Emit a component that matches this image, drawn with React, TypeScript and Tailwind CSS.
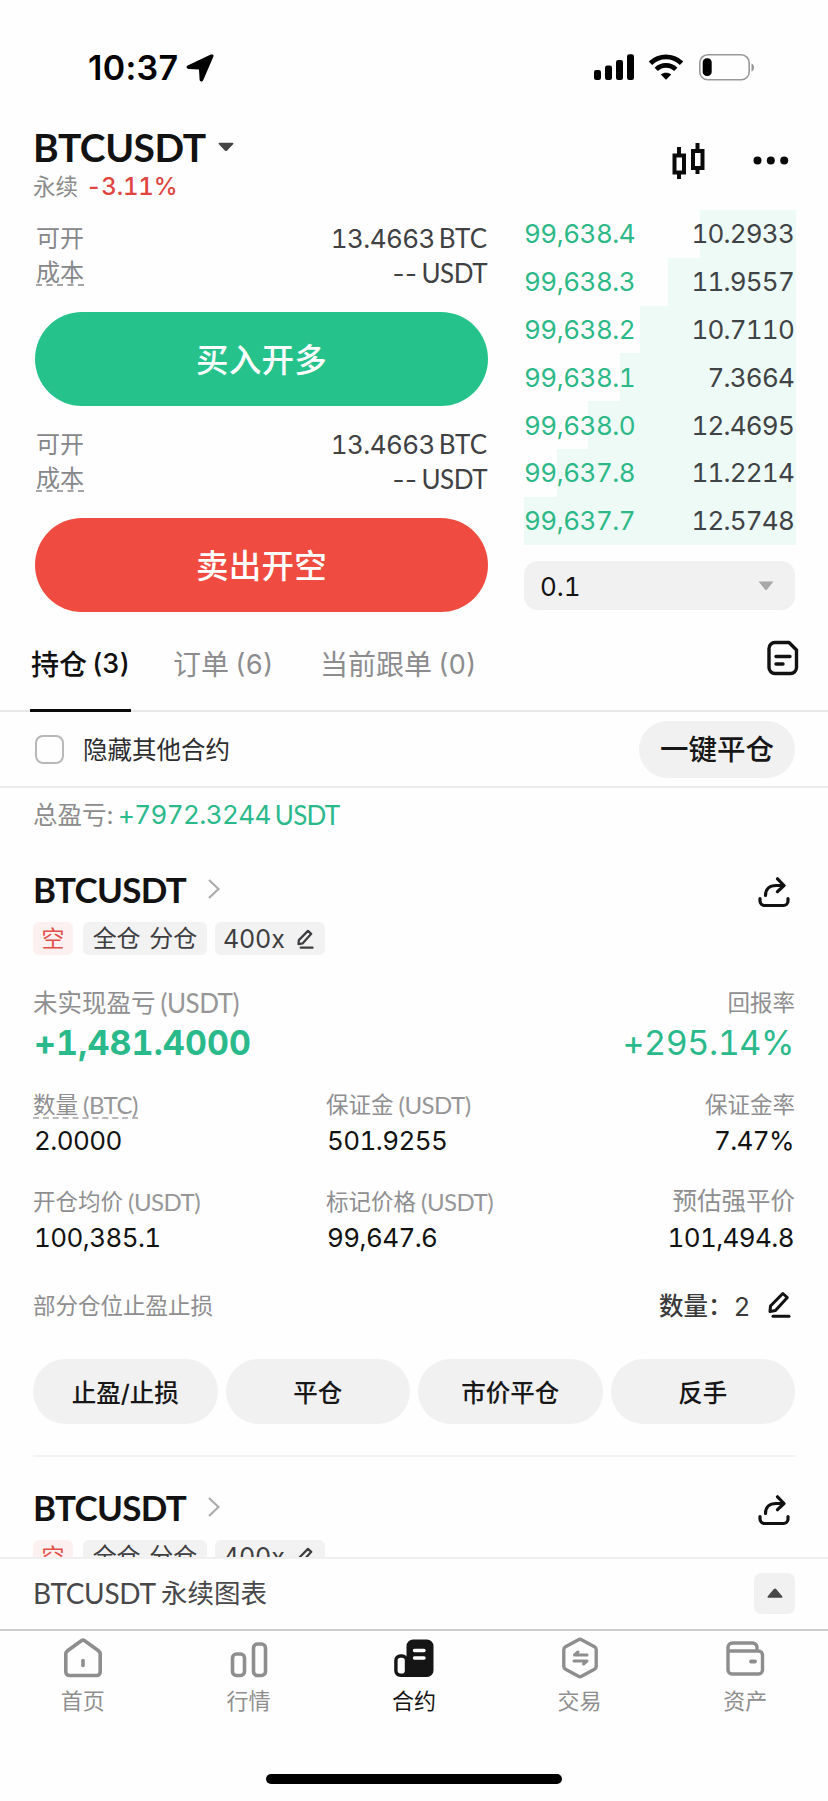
import type { ReactNode } from "react";

const Num = ({ children, className = "" }: { children: ReactNode; className?: string }) => (
  <span className={`tabular-nums ${className}`}>{children}</span>
);

const Lat = ({ children, className = "" }: { children: ReactNode; className?: string }) => (
  <span className={`font-[Lato,'Noto_Sans_CJK_SC',sans-serif] ${className}`}>{children}</span>
);

function StatusBar() {
  return (
    <div className="flex h-[122px] shrink-0 items-start pt-[54px] pl-[88px] text-black">
      <span className="mt-[-2px] w-[98px] text-[34px] leading-8 font-semibold tracking-[0.300px]">10:37</span>
      <svg width="28" height="28" viewBox="0 0 28 28" fill="currentColor">
        <path d="M26.600.6c.9.400 1.200 1.200.8 2L17.200 26.200c-.8 1.800-3.400 1.500-3.600-.4l-.6-10.400-10.600-.5c-2-.1-2.500-2.600-.7-3.500L24.800.6c.7-.300 1.300-.300 1.800 0z" />
      </svg>
      <div className="ml-[380px] flex items-start">
        <svg width="40" height="27" viewBox="0 0 40 27" fill="currentColor">
          <rect x="0" y="16" width="7" height="10" rx="2.200" />
          <rect x="11" y="11.500" width="7" height="14.500" rx="2.200" />
          <rect x="22" y="6" width="7" height="20" rx="2.200" />
          <rect x="33" y="0.300" width="7" height="25.700" rx="2.200" />
        </svg>
        <svg className="ml-[15px]" width="34" height="27" viewBox="0 0 34 27" fill="none" stroke="currentColor">
          <path d="M1.500 9.200a22.300 22.300 0 0 1 31 0" strokeWidth="4.800" />
          <path d="M7.200 15.400a14 14 0 0 1 19.600 0" strokeWidth="4.600" />
          <path d="M17 25.800l-5.200-5.200c2.800-2.600 7.600-2.600 10.400 0z" fill="currentColor" stroke="none" />
        </svg>
        <svg className="ml-[16px]" width="57" height="27" viewBox="0 0 57 27">
          <rect x="0.800" y="0.800" width="49.400" height="25" rx="8" fill="none" stroke="#989898" strokeWidth="1.600" />
          <rect x="3.700" y="4.300" width="9" height="17.800" rx="4.200" fill="#000" />
          <path d="M52.500 9.500c3.400 1 3.400 7 0 8z" fill="#989898" />
        </svg>
      </div>
    </div>
  );
}

function Header() {
  return (
    <div className="flex h-[88px] shrink-0 pl-[33px]">
      <div className="flex w-[639px] flex-col">
        <div className="mt-[5px] flex h-[40px] items-center">
          <Lat className="w-[185px] text-[39px] leading-[40px] font-bold tracking-[-0.500px] text-[#121212]">BTCUSDT</Lat>
          <svg width="16" height="10" viewBox="0 0 16 10" fill="#454545">
            <path d="M1.500.8h13c.9 0 1.200.9.600 1.500L9.200 8.500c-.7.700-1.700.700-2.400 0L.9 2.300C.3 1.700.6.8 1.500.8z" />
          </svg>
        </div>
        <div className="mt-[6px] flex h-[28px] items-center leading-7">
          <span className="w-[53px] text-[22.500px] text-[#8b8b8b]">永续</span>
          <Num className="text-[24px] font-medium tracking-[-0.200px] text-[#e0453f]">-3.11%</Num>
        </div>
      </div>
      <svg className="mt-[21px] shrink-0" width="33" height="36" viewBox="0 0 33 36" fill="none" stroke="#0a0a0a" strokeWidth="4">
        <path d="M2.500 12.500h9.500v17H2.500z M21 8h9.500v17H21z" />
        <path d="M7 4v7M7 31v5M25.500 0v7M25.500 26v5" />
      </svg>
      <svg className="mt-[34px] ml-[48px] shrink-0" width="36" height="9" viewBox="0 0 36 9" fill="#0a0a0a">
        <circle cx="4.500" cy="4.500" r="4" />
        <circle cx="17.800" cy="4.500" r="4" />
        <circle cx="31.200" cy="4.500" r="4" />
      </svg>
    </div>
  );
}

function OrderSide({ label, color }: { label: string; color: string }) {
  return (
    <div className="h-[206px]">
      <div className="flex h-[35px] items-center justify-between pr-px text-[26px] text-[#3f4143]">
        <span className="text-[24px] text-[#86878a]">可开</span>
        <span className="flex items-center gap-[4px]">
          <Num className="tracking-[-0.600px]">13.4663</Num>
          <Lat className="text-[26px]">BTC</Lat>
        </span>
      </div>
      <div className="flex h-[35px] items-center justify-between pr-px text-[26px] text-[#3f4143]">
        <span className="border-b-2 border-dashed border-[#a5a5a5] text-[24px] leading-[22px] text-[#86878a]">成本</span>
        <span className="flex items-center gap-[4px]">
          <span className="tracking-[0.500px]">--</span>
          <Lat className="text-[26px] tracking-[-0.500px]">USDT</Lat>
        </span>
      </div>
      <button className={`mt-[21px] ml-[-1px] flex h-[94px] w-[453px] items-center justify-center rounded-full text-[32.500px] font-medium tracking-[0.300px] text-white ${color}`}>
        <span className="mt-[5px]">{label}</span>
      </button>
    </div>
  );
}

const book = [
  { price: "99,638.4", amount: "10.2933", depth: 96 },
  { price: "99,638.3", amount: "11.9557", depth: 128 },
  { price: "99,638.2", amount: "10.7110", depth: 156 },
  { price: "99,638.1", amount: "7.3664", depth: 176 },
  { price: "99,638.0", amount: "12.4695", depth: 208 },
  { price: "99,637.8", amount: "11.2214", depth: 239 },
  { price: "99,637.7", amount: "12.5748", depth: 272 },
];

function OrderBook() {
  return (
    <div className="ml-[36px] w-[272px] text-[26px]">
      {book.map((r) => (
        <div key={r.price} className="relative flex h-[47.800px] items-center justify-between">
          <div className="absolute inset-y-0 right-0 bg-[#eefaf5]" style={{ width: r.depth }} />
          <Num className="relative tracking-[-0.500px] text-[#2db888]">{r.price}</Num>
          <Num className="relative mr-[2px] tracking-[-0.800px] text-[#3f4345]">{r.amount}</Num>
        </div>
      ))}
      <div className="mt-[16px] flex h-[49px] w-[271px] items-center justify-between rounded-[14px] bg-[#f1f1f1] pr-[21px] pl-[16px] text-[#141414]">
        <Num className="mt-[2px]">0.1</Num>
        <svg className="mt-[2px]" width="16" height="10" viewBox="0 0 16 10" fill="#a8a8a8">
          <path d="M.5.500h15L8.800 8.800c-.5.500-1.100.500-1.600 0z" />
        </svg>
      </div>
    </div>
  );
}

function Tabs() {
  return (
    <div className="flex h-[98px] shrink-0 border-b-2 border-[#e8e8e8] pl-[30px] text-[28px] text-[#8c8c8e]">
      <div className="mb-[-2px] flex h-[98px] w-[101px] items-center gap-[5px] border-b-[3px] border-[#0c0c0c] pt-[6px] pl-[1px] font-medium whitespace-nowrap text-[#111]">
        持仓<Num className="text-[27px] tracking-[-0.300px]">(3)</Num>
      </div>
      <div className="ml-[42px] flex h-[97px] w-[105px] items-center gap-[6px] pt-[5px] whitespace-nowrap">
        订单<Num className="text-[27px]">(6)</Num>
      </div>
      <div className="ml-[42px] flex h-[97px] w-[170px] items-center gap-[6px] pt-[5px] whitespace-nowrap">
        当前跟单<Num className="text-[27px]">(0)</Num>
      </div>
      <svg className="mt-[26px] ml-[277px]" width="32" height="36" viewBox="0 0 32 36" fill="none" stroke="#111" strokeWidth="3.400" strokeLinecap="round" strokeLinejoin="round">
        <path d="M8 2.500h14l7.500 7.500v17.500a6 6 0 0 1-6 6H8a6 6 0 0 1-6-6v-19a6 6 0 0 1 6-6z" />
        <path d="M9 16.500h14M9 24h7" />
      </svg>
    </div>
  );
}

function Pencil({ size, color }: { size: "sm" | "lg"; color: string }) {
  return (
    <svg className={size === "sm" ? "h-[20px] w-[17px]" : "h-[27px] w-[23px]"} viewBox="0 0 23 27" fill="none" stroke={color} strokeWidth="3" strokeLinecap="round" strokeLinejoin="round">
      <path d="M14.800 2.500l4.500 4L7.500 19.500l-5.500 1 .5-5.500z" />
      <path d="M5 25.300h16" />
    </svg>
  );
}

function PositionHead() {
  return (
    <div>
      <div className="flex h-[38px] items-center">
        <Lat className="w-[175px] text-[35px] leading-[38px] font-bold tracking-[-0.700px] text-[#121212]">BTCUSDT</Lat>
        <svg width="12" height="20" viewBox="0 0 12 20" fill="none" stroke="#ababab" strokeWidth="2.200">
          <path d="M1 1l9.500 9L1 19" />
        </svg>
        <svg className="mt-[6px] ml-[538px]" width="32" height="31" viewBox="0 0 32 31" fill="none" stroke="#111" strokeWidth="3.200" strokeLinecap="round" strokeLinejoin="round">
          <path d="M2 21.500v2.500a4.500 4.500 0 0 0 4.500 4.500h19A4.500 4.500 0 0 0 30 24v-2.500" />
          <path d="M7.500 18.500C7.500 11.500 12 8.500 18 8.500h7.500" />
          <path d="M19.500 1.800l6.500 6.700-6.500 6.200" />
        </svg>
      </div>
      <div className="mt-[14px] flex h-[33px] text-[24px] leading-[34px] text-[#3e3e40]">
        <span className="w-[40px] rounded-[6px] bg-[#fdf0f0] text-center text-[23px] text-[#e2504a]">空</span>
        <span className="ml-[10px] w-[124px] rounded-[6px] bg-[#f2f2f3] text-center [word-spacing:2px]">全仓 分仓</span>
        <span className="ml-[8px] flex w-[110px] items-center justify-between rounded-[6px] bg-[#f2f2f3] pr-[11px] pl-[8px]">
          <span className="text-[25px] tracking-[0.200px]">400x</span>
          <Pencil size="sm" color="#3e3e40" />
        </span>
      </div>
    </div>
  );
}

function Field({ label, unit, value, right, big, dashed }: { label: string; unit?: string; value: string; right?: boolean; big?: boolean; dashed?: boolean }) {
  return (
    <div className={`flex flex-col ${right ? "items-end" : "items-start"}`}>
      <div className={`flex items-center gap-[5px] leading-[25px] text-[#8e8e90] ${big ? "text-[24.500px]" : "text-[22.500px]"} ${dashed ? "border-b-2 border-dashed border-[#b9b9b9]" : "border-b-2 border-transparent"}`}>
        {label}
        {unit && <Lat className="text-[24px] tracking-[-0.500px] text-[#969698]">{unit}</Lat>}
      </div>
      <Num className="mx-px mt-[6px] text-[26px] leading-[32px] tracking-[-0.600px] text-[#121212]">{value}</Num>
    </div>
  );
}

function Position() {
  return (
    <div className="mx-[33px] shrink-0">
      <PositionHead />
      <div className="mt-[33px] flex h-[92px] justify-between">
        <div>
          <div className="flex items-center gap-[5px] text-[24.500px] leading-[30px] text-[#8e8e90]">
            未实现盈亏<Lat className="text-[26px] tracking-[-0.500px] text-[#969698]">(USDT)</Lat>
          </div>
          <Num className="mt-[5px] ml-px block text-[34px] leading-[40px] font-bold tracking-[0.100px] text-[#2ab98a]">+1,481.4000</Num>
        </div>
        <div className="text-right">
          <div className="text-[22.500px] leading-[30px] text-[#8e8e90]">回报率</div>
          <Num className="mt-[5px] mr-px block text-[34px] leading-[40px] tracking-[-0.400px] text-[#2ab98a]">+295.14%</Num>
        </div>
      </div>
      <div className="mt-[12px] grid h-[97px] grid-cols-[293px_1fr_auto]">
        <Field label="数量" unit="(BTC)" value="2.0000" dashed />
        <Field label="保证金" unit="(USDT)" value="501.9255" />
        <Field label="保证金率" value="7.47%" right />
      </div>
      <div className="grid h-[101px] grid-cols-[293px_1fr_auto]">
        <Field label="开仓均价" unit="(USDT)" value="100,385.1" />
        <Field label="标记价格" unit="(USDT)" value="99,647.6" />
        <Field label="预估强平价" value="101,494.8" right big />
      </div>
      <div className="flex h-[32px] items-center justify-between">
        <span className="text-[22.500px] text-[#8e8e90]">部分仓位止盈止损</span>
        <span className="flex items-center text-[24.500px] text-[#3a3a3a]">
          <span className="w-[75px] font-medium">数量：</span>
          <span className="w-[34px] text-[26px]">2</span>
          <span className="mt-[-4px] mr-[4px]"><Pencil size="lg" color="#111" /></span>
        </span>
      </div>
      <div className="mt-[37px] grid grid-cols-4 gap-[8px]">
        {["止盈/止损", "平仓", "市价平仓", "反手"].map((t) => (
          <button key={t} className="h-[65px] rounded-full bg-[#f1f1f1] pt-[3px] text-[24.500px] font-medium text-[#171717]">{t}</button>
        ))}
      </div>
      <div className="mt-[31px] h-[2px] bg-[#f3f3f3]" />
      <div className="h-px" />
    </div>
  );
}

const navItems: { label: string; active?: boolean; icon: ReactNode }[] = [
  {
    label: "首页",
    icon: (
      <g fill="none" stroke="currentColor" strokeWidth="3.600" strokeLinejoin="round" strokeLinecap="round">
        <path d="M4.500 13.800L18.700 3.500q1.300-.9 2.600 0L35.500 13.800q1.700 1.400 1.700 3.200v18a3.500 3.500 0 0 1-3.500 3.500H6.300A3.500 3.500 0 0 1 2.800 35V17q0-1.800 1.700-3.200z" />
        <path d="M20 23.500v5" />
      </g>
    ),
  },
  {
    label: "行情",
    icon: (
      <g fill="none" stroke="currentColor" strokeWidth="3.600">
        <rect x="4.500" y="17" width="12" height="21.500" rx="4" />
        <rect x="25.500" y="7" width="12" height="31.500" rx="4" />
      </g>
    ),
  },
  {
    label: "合约",
    active: true,
    icon: (
      <g>
        <path d="M19 2.500h14a6.500 6.500 0 0 1 6.500 6.500v24.500a6.500 6.500 0 0 1-6.500 6.500H7.500l5-8V9a6.500 6.500 0 0 1 6.500-6.500z" fill="currentColor" />
        <rect x="1.900" y="19" width="10.600" height="19.300" rx="4.500" fill="#fff" stroke="currentColor" strokeWidth="3.400" />
        <path d="M20.500 13.500h9.500M20.500 21h9.500" stroke="#fff" strokeWidth="3.400" strokeLinecap="round" />
      </g>
    ),
  },
  {
    label: "交易",
    icon: (
      <g fill="none" stroke="currentColor" strokeLinejoin="round" strokeLinecap="round">
        <path d="M18.500 2.700q1.500-.8 3 0l13 7q1.700 1 1.700 2.900v16.800q0 1.900-1.700 2.900l-13 7q-1.500.8-3 0l-13-7q-1.700-1-1.700-2.900V12.600q0-1.900 1.700-2.900z" strokeWidth="3.400" />
        <path d="M27 18H14.500L18 15M14 24h13l-3.500 3" strokeWidth="3" />
      </g>
    ),
  },
  {
    label: "资产",
    icon: (
      <g fill="none" stroke="currentColor" strokeWidth="3.400" strokeLinejoin="round" strokeLinecap="round">
        <path d="M3 12v21a4 4 0 0 0 4 4h26.500a4 4 0 0 0 4-4V18a4 4 0 0 0-4-4H4.500M3 13V10.500A4.500 4.500 0 0 1 7.500 6h20a4.500 4.500 0 0 1 4.500 4.500v3" />
        <path d="M26 24.500h4" strokeWidth="3.800" />
      </g>
    ),
  },
];

export default function App() {
  return (
    <div className="flex h-[1801px] w-[828px] flex-col overflow-hidden bg-[#fefefe] font-[Inter,'Noto_Sans_CJK_SC',sans-serif]">
      <StatusBar />
      <Header />
      <div className="flex h-[404px] shrink-0 pl-[36px]">
        <div className="w-[452px] pt-[11px]">
          <OrderSide label="买入开多" color="bg-[#26c28c]" />
          <OrderSide label="卖出开空" color="bg-[#f04b40]" />
        </div>
        <OrderBook />
      </div>
      <Tabs />
      <div className="flex h-[76px] shrink-0 items-center border-b-2 border-[#ebebeb] pr-[33px] pl-[35px]">
        <span className="h-[29px] w-[29px] rounded-[8px] border-2 border-[#b8b8b8]" />
        <span className="mt-[2px] ml-[19px] text-[24.500px] text-[#2d2d2f]">隐藏其他合约</span>
        <button className="ml-auto h-[57px] w-[156px] rounded-full bg-[#f1f1f1] pt-[3px] text-[28.500px] font-medium text-[#171717]">一键平仓</button>
      </div>
      <div className="flex h-[82px] shrink-0 items-start pt-[12px] pl-[33px] text-[24.500px] leading-[30px]">
        <span className="w-[85px] text-[#8c8c8c]">总盈亏:</span>
        <Num className="text-[26px] tracking-[-0.600px] text-[#2ab98a]">+7972.3244</Num>
        <Lat className="ml-[4px] text-[26px] tracking-[-0.700px] text-[#2ab98a]">USDT</Lat>
      </div>
      <Position />
      <div className="mx-[33px] h-[99px] shrink-0 overflow-hidden">
        <div className="pt-[30px]">
          <PositionHead />
        </div>
      </div>
      <div className="flex h-[73px] shrink-0 items-center border-t-2 border-[#f0f0f0] bg-[#fefefe] pr-[33px] pl-[33px] text-[#48484a]">
        <Lat className="mt-[-3px] w-[128px] text-[28px] tracking-[-0.300px]">BTCUSDT</Lat>
        <span className="mt-[-2px] text-[26.500px]">永续图表</span>
        <span className="mt-[-3px] ml-auto flex h-[41px] w-[41px] items-center justify-center rounded-[7px] bg-[#f1f1f1]">
          <svg width="16" height="10" viewBox="0 0 16 10" fill="#474747">
            <path d="M1.500 9.800h13c.9 0 1.300-.9.700-1.600L9.100.9C8.500.200 7.500.200 6.900.9L.8 8.200c-.6.700-.2 1.600.7 1.600z" />
          </svg>
        </span>
      </div>
      <nav className="mt-[-1px] grid h-[145px] shrink-0 grid-cols-5 border-t-2 border-[#cdcdcd] pt-[6px]">
        {navItems.map((n) => (
          <div key={n.label} className={`flex flex-col items-center text-[22px] leading-[30px] ${n.active ? "text-[#151515]" : "text-[#8e8e8e]"}`}>
            <svg width="40" height="42" viewBox="0 0 40 42">{n.icon}</svg>
            <span className="mt-[7px]">{n.label}</span>
          </div>
        ))}
      </nav>
      <div className="mx-auto h-[10px] w-[296px] shrink-0 rounded-full bg-black" />
    </div>
  );
}
